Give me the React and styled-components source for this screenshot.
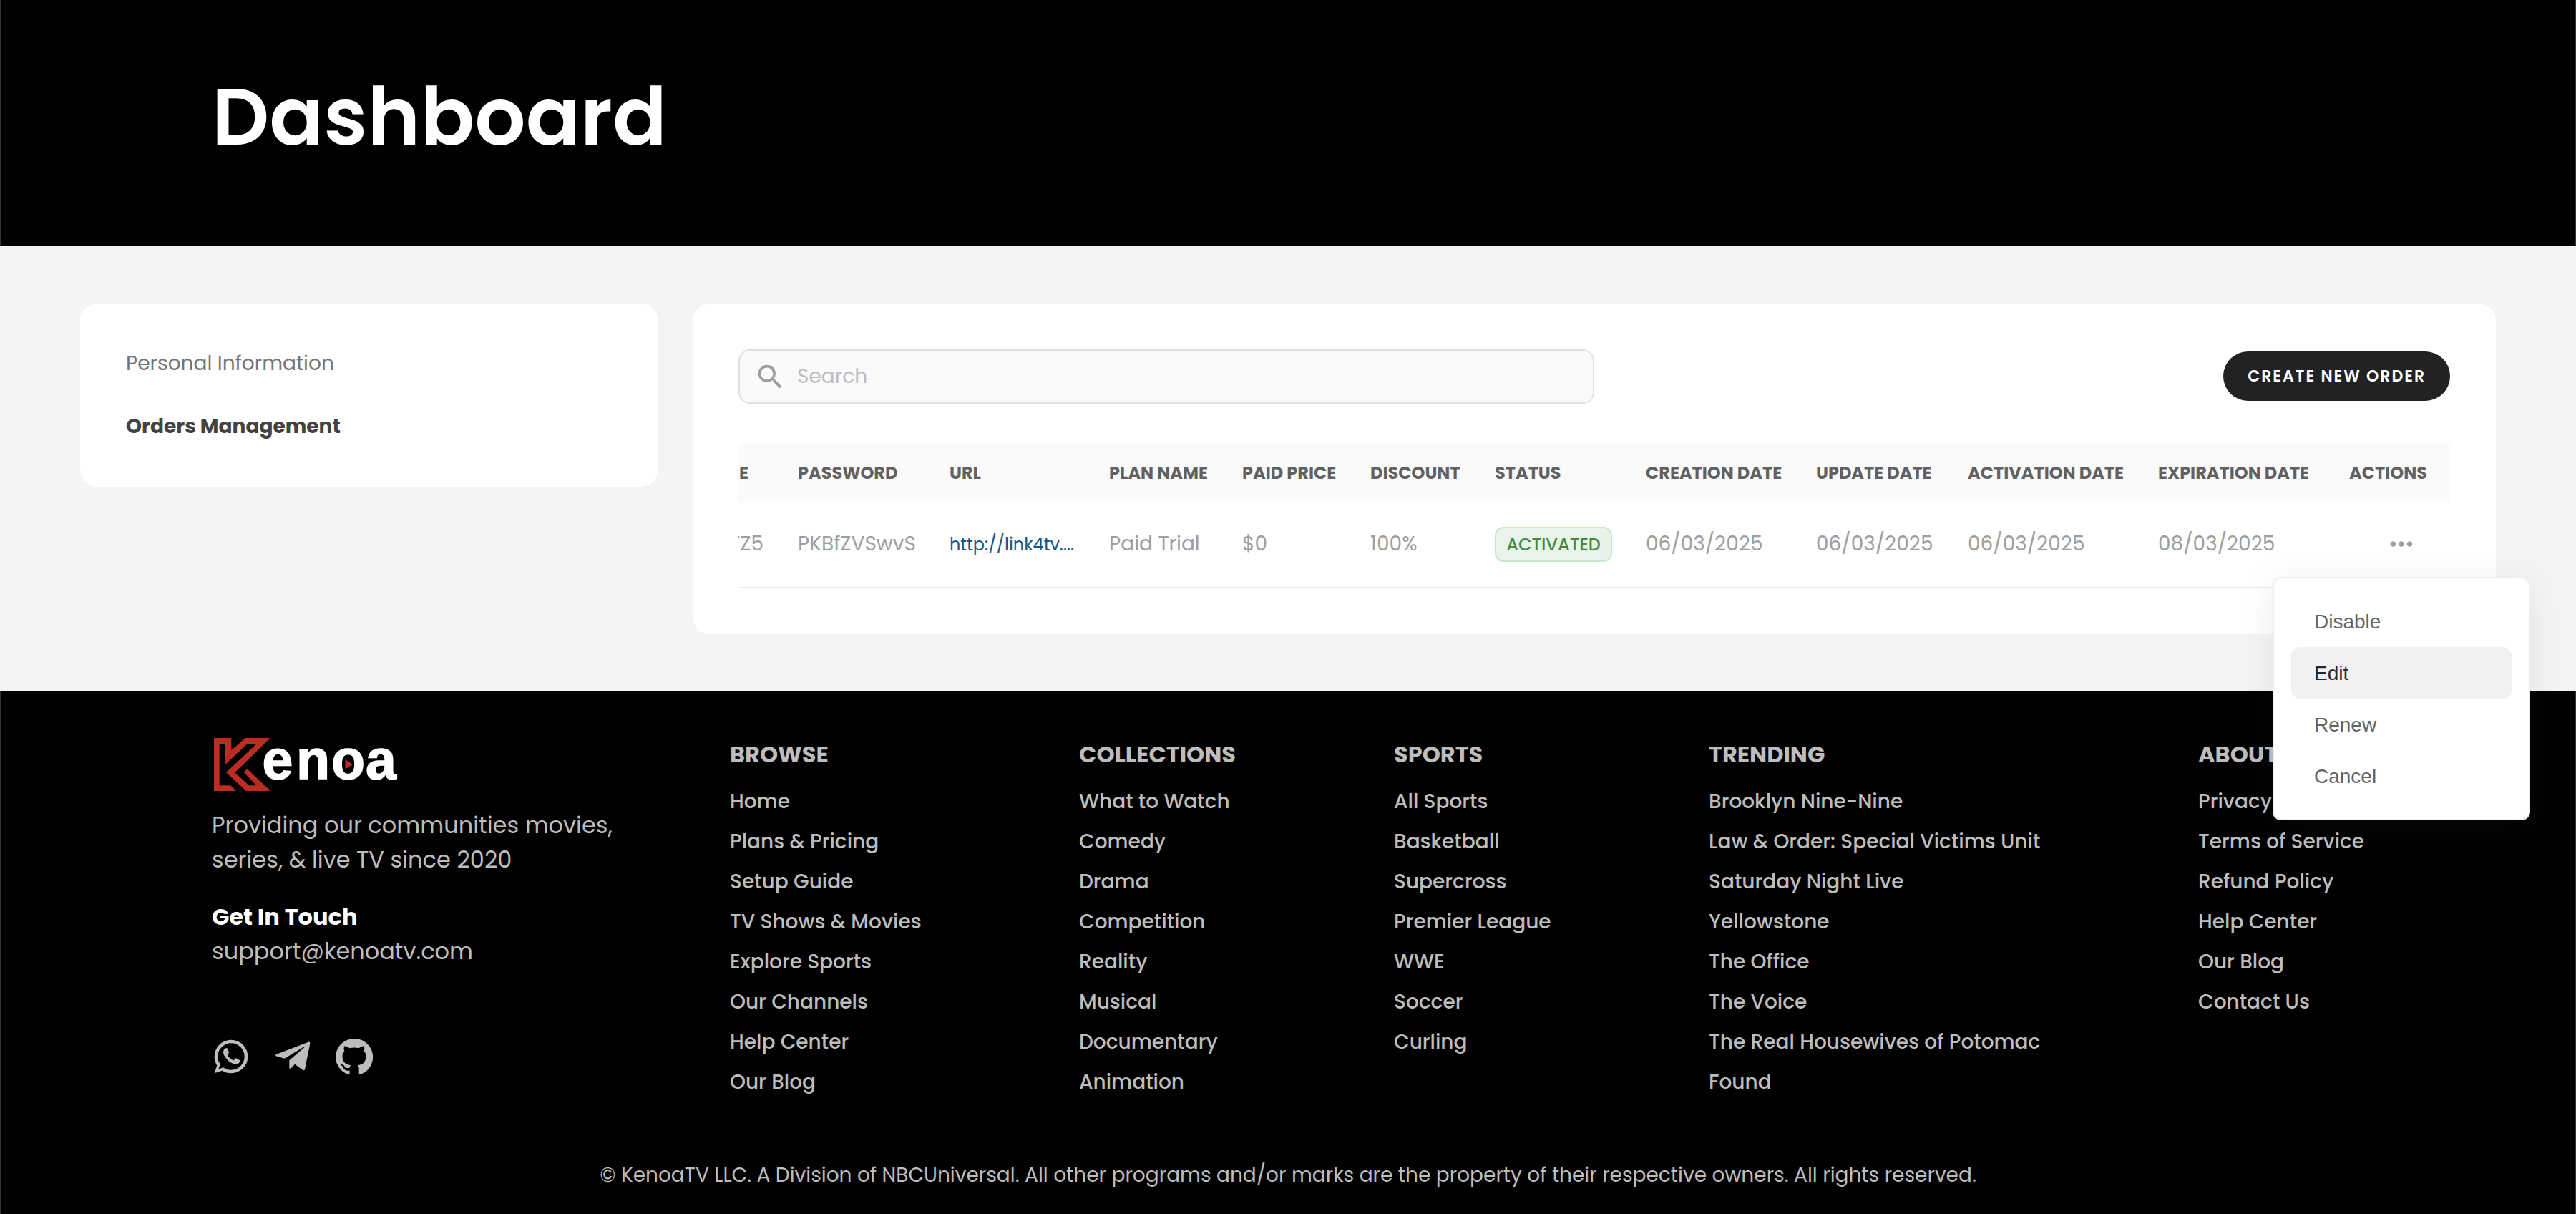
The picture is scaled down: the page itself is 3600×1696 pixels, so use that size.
import React from 'react'
import styled, { createGlobalStyle } from 'styled-components'
import { MdSearch, MdMoreHoriz } from 'react-icons/md'

const GlobalStyle = createGlobalStyle`
    * {
        box-sizing: border-box;
    }
    body {
        margin: 0;
        background: #f4f4f4;
        font-family: 'Poppins', 'Inter', sans-serif;
        -webkit-font-smoothing: antialiased;
    }
`;

const Page = styled.div`
    min-height: 1696px;
    display: flex;
    flex-direction: column;
`;

const Hero = styled.header`
    height: 344px;
    padding: 79px 294px 0;
    background: #000;
    border-left: 2px solid #333;
    border-right: 2px solid #333;
`;

const Title = styled.h1`
    margin: 0;
    font-size: 112px;
    font-weight: 600;
    line-height: 168px;
    color: #fff;
`;

const Main = styled.main`
    height: 622px;
    padding: 80px 112px;
    display: flex;
    align-items: flex-start;
    gap: 48px;
`;

const Card = styled.section`
    background: #fff;
    border-radius: 24px;
`;

const Sidebar = styled(Card)`
    width: 808px;
    flex-shrink: 0;
    padding: 40px 64px;
`;

const SidebarLink = styled.a`
    display: block;
    font-size: 28px;
    line-height: 88px;
    font-weight: ${({ $active }) => ($active ? 700 : 400)};
    color: ${({ $active }) => ($active ? '#424242' : '#757575')};
`;

const Orders = styled(Card)`
    width: 2520px;
    padding: 64px;
`;

const Toolbar = styled.div`
    display: flex;
    align-items: center;
    justify-content: space-between;
    margin-bottom: 56px;
`;

const SearchBox = styled.label`
    width: 1196px;
    height: 76px;
    padding-left: 20px;
    display: flex;
    align-items: center;
    gap: 15px;
    background: #fafafa;
    border: 2px solid #e0e0e0;
    border-radius: 16px;
    color: #9e9e9e;
`;

const SearchInput = styled.input`
    flex: 1;
    padding: 0;
    border: 0;
    outline: 0;
    background: transparent;
    font: 400 28px/42px 'Poppins', 'Inter', sans-serif;
    &::placeholder {
        color: #bdbdbd;
        opacity: 1;
    }
`;

const CreateButton = styled.button`
    height: 69px;
    margin-bottom: 1px;
    padding: 0 34px;
    border: 0;
    border-radius: 35px;
    background: #212224;
    color: #fff;
    font: 600 22px/34px 'Poppins', 'Inter', sans-serif;
    letter-spacing: 2px;
    white-space: nowrap;
`;

const Row = styled.div`
    display: grid;
    grid-template-columns: 59px 212px 223px 186px 179px 174px 211px 238px 212px 266px 266px 166px;
    align-items: center;
`;

const HeadRow = styled(Row)`
    height: 80px;
    background: #fafafa;
    font-size: 24px;
    font-weight: 700;
    color: #616161;
`;

const BodyRow = styled(Row)`
    height: 122px;
    border-bottom: 2px solid #eeeeee;
    font-size: 28px;
    color: #9e9e9e;
`;

const Cell = styled.div`
    padding: 0 0 0 24px;
    white-space: nowrap;
    &:last-child {
        padding: 0 32px 0 0;
        text-align: right;
    }
`;

// first column is scrolled out of view, only its tail is visible
const ClippedCell = styled.div`
    display: flex;
    justify-content: flex-end;
    width: ${({ $width }) => $width}px;
    overflow: hidden;
    white-space: nowrap;
`;

const UrlLink = styled.a`
    font-size: 24px;
    color: #1b5482;
`;

const Badge = styled.span`
    display: inline-flex;
    align-items: center;
    justify-content: center;
    width: 164px;
    height: 49px;
    vertical-align: middle;
    background: #e8f4e9;
    border: 2px solid #c8e6c9;
    border-radius: 12px;
    font-size: 24px;
    font-weight: 500;
    color: #43893f;
`;

const MoreButton = styled.span`
    position: relative;
    display: inline-flex;
    vertical-align: middle;
    margin-right: 13px;
    color: #9e9e9e;
`;

const Menu = styled.ul`
    position: absolute;
    z-index: 2;
    top: 69px;
    right: -157px;
    width: 360px;
    margin: 0;
    padding: 24px;
    list-style: none;
    background: #fff;
    border: 2px solid #eef0f0;
    border-radius: 12px;
    box-shadow: 0 8px 48px rgba(58, 83, 100, 0.1);
`;

const MenuItem = styled.li`
    padding: 2px 32px 0;
    text-align: left;
    font: 400 28px/70px 'Liberation Sans', Helvetica, sans-serif;
    border-radius: 12px;
    background: ${({ $active }) => ($active ? '#f0f1f3' : 'transparent')};
    color: ${({ $active }) => ($active ? '#1f2a33' : '#636363')};
`;

const Footer = styled.footer`
    height: 730px;
    padding: 64px 294px 0;
    background: #000;
    border-left: 2px solid #333;
    border-right: 2px solid #333;
    color: #bdbdbd;
    display: flex;
    flex-direction: column;
`;

const FooterGrid = styled.div`
    height: 591px;
    display: grid;
    grid-template-columns: 724px 488px 440px 440px 684px 1fr;
`;

const Brand = styled.div`
    display: flex;
    flex-direction: column;
    font-size: 32px;
    line-height: 48px;
`;

const LogoSvg = styled.svg`
    display: block;
    width: 280px;
    height: 76px;
    margin-bottom: 23px;
`;

const LogoText = styled.text`
    font: 700 77px 'Liberation Sans', Arial, sans-serif;
    fill: #fff;
    stroke: #fff;
    stroke-width: 1.6px;
`;

const Tagline = styled.p`
    width: 600px;
    margin: 0 0 32px;
`;

const ContactTitle = styled.div`
    font-weight: 700;
    color: #fff;
`;

const Socials = styled.div`
    display: flex;
    gap: 30px;
    margin: 95px 0 0 -1px;
    svg {
        width: 56px;
        height: 56px;
        fill: currentColor;
    }
`;

const ColumnTitle = styled.h3`
    margin: 0 0 14px;
    font-size: 32px;
    line-height: 48px;
    font-weight: 700;
`;

const FooterLink = styled.a`
    display: block;
    font-size: 28px;
    line-height: 56px;
    font-weight: 500;
    white-space: nowrap;
`;

const Copyright = styled.p`
    margin: 0;
    text-align: center;
    font-size: 28px;
    line-height: 42px;
`;

const headers = [
  'PASSWORD', 'URL', 'PLAN NAME', 'PAID PRICE', 'DISCOUNT', 'STATUS',
  'CREATION DATE', 'UPDATE DATE', 'ACTIVATION DATE', 'EXPIRATION DATE', 'ACTIONS',
];

const order = {
  usernameTail: 'TZ5',
  password: 'PKBfZVSwvS',
  url: 'http://link4tv....',
  plan: 'Paid Trial',
  price: '$0',
  discount: '100%',
  status: 'ACTIVATED',
  dates: ['06/03/2025', '06/03/2025', '06/03/2025', '08/03/2025'],
};

const actions = ['Disable', 'Edit', 'Renew', 'Cancel'];

const footerColumns = [
  {
    title: 'BROWSE',
    links: ['Home', 'Plans & Pricing', 'Setup Guide', 'TV Shows & Movies', 'Explore Sports', 'Our Channels', 'Help Center', 'Our Blog'],
  },
  {
    title: 'COLLECTIONS',
    links: ['What to Watch', 'Comedy', 'Drama', 'Competition', 'Reality', 'Musical', 'Documentary', 'Animation'],
  },
  {
    title: 'SPORTS',
    links: ['All Sports', 'Basketball', 'Supercross', 'Premier League', 'WWE', 'Soccer', 'Curling'],
  },
  {
    title: 'TRENDING',
    links: ['Brooklyn Nine-Nine', 'Law & Order: Special Victims Unit', 'Saturday Night Live', 'Yellowstone', 'The Office', 'The Voice', 'The Real Housewives of Potomac', 'Found'],
  },
  {
    title: 'ABOUT',
    links: ['Privacy Policy', 'Terms of Service', 'Refund Policy', 'Help Center', 'Our Blog', 'Contact Us'],
  },
];

const Logo = () => (
  <LogoSvg viewBox="0 0 280 76">
    <path
      d="M3 1H27.300V18.300L46.700 1H82L32.300 49.300L52 67.300H62.300L44.700 49L49.300 44L82 75H48L20 49.300L62.700 9H49.700L19 38V9H10.700V67.300H26.300L34 75H3Z"
      fill="#bb2c22"
    />
    <LogoText x="70.500 118 167 215" y="57.500">enoa</LogoText>
    <path d="M186.500 31L197 38L186.500 44.500Z" fill="#bb2c22" />
  </LogoSvg>
);

const WhatsAppIcon = () => (
  <svg viewBox="0 0 24 24">
    <path d="M16.75 13.96c.25.13.41.2.46.3.06.11.04.61-.21 1.18-.2.56-1.24 1.1-1.7 1.12-.46.02-.47.36-2.96-.73-2.49-1.09-3.99-3.75-4.11-3.92-.12-.17-.96-1.38-.92-2.61.05-1.22.69-1.8.95-2.04.24-.26.51-.29.68-.26h.47c.15 0 .36-.06.55.45l.69 1.87c.06.13.1.28.01.44l-.27.41-.39.42c-.12.12-.26.25-.12.5.12.26.62 1.09 1.32 1.78.91.88 1.71 1.17 1.95 1.3.24.14.39.12.54-.04l.81-.94c.19-.25.35-.19.58-.11l1.67.88M12 2a10 10 0 0 1 10 10 10 10 0 0 1-10 10c-1.97 0-3.8-.57-5.35-1.55L2 22l1.55-4.65A9.969 9.969 0 0 1 2 12 10 10 0 0 1 12 2m0 2a8 8 0 0 0-8 8c0 1.72.54 3.31 1.46 4.61L4.5 19.5l2.89-.96A7.95 7.95 0 0 0 12 20a8 8 0 0 0 8-8 8 8 0 0 0-8-8z" />
  </svg>
);

const TelegramIcon = () => (
  <svg viewBox="0 0 56 56">
    <path d="M5 25L49.800 7.700C51.500 7.100 52.600 8.100 52.300 10L45 46C44.600 47.400 43.300 47.700 42 46.800L31 38.800L25.600 44.300C24.600 45.300 23.300 44.900 23.300 43.500V33.300L45.200 14.600C45.600 14 45 13.700 44.300 14.100L18 30C17.200 30.500 16.500 30.600 15.700 30.400L5.400 27.600C3.900 27.100 3.700 25.700 5 25Z" />
  </svg>
);

const GitHubIcon = () => (
  <svg viewBox="0 0 24 24">
    <path d="M12 1.270a11 11 0 00-3.480 21.460c.550.090.730-.280.730-.550v-1.840c-3.030.640-3.670-1.460-3.670-1.460-.550-1.290-1.280-1.650-1.280-1.650-.920-.650.100-.650.100-.650 1.100 0 1.730 1.100 1.730 1.100.920 1.650 2.570 1.200 3.210.920a2 2 0 01.640-1.470c-2.470-.270-5.040-1.190-5.040-5.500 0-1.100.460-2.100 1.200-2.840a3.760 3.760 0 010-2.930s.910-.280 3.110 1.100c1.800-.490 3.700-.490 5.500 0 2.100-1.380 3.020-1.100 3.020-1.100a3.760 3.760 0 01.100 2.930c.830.740 1.200 1.740 1.200 2.940 0 4.210-2.570 5.130-5.040 5.400.450.370.820.920.820 2.020v3.030c0 .270.100.640.730.550A11 11 0 0012 1.270" />
  </svg>
);

const ActionsMenu = () => (
  <Menu>
    {actions.map((action) => (
      <MenuItem key={action} $active={action === 'Edit'}>{action}</MenuItem>
    ))}
  </Menu>
);

const OrdersTable = () => (
  <div>
    <HeadRow>
      <ClippedCell $width={14}>E</ClippedCell>
      {headers.map((header) => (
        <Cell key={header}>{header}</Cell>
      ))}
    </HeadRow>
    <BodyRow>
      <ClippedCell $width={35}>{order.usernameTail}</ClippedCell>
      <Cell>{order.password}</Cell>
      <Cell><UrlLink>{order.url}</UrlLink></Cell>
      <Cell>{order.plan}</Cell>
      <Cell>{order.price}</Cell>
      <Cell>{order.discount}</Cell>
      <Cell><Badge>{order.status}</Badge></Cell>
      {order.dates.map((date, index) => (
        <Cell key={index}>{date}</Cell>
      ))}
      <Cell>
        <MoreButton>
          <MdMoreHoriz size={46} />
          <ActionsMenu />
        </MoreButton>
      </Cell>
    </BodyRow>
  </div>
);

const App = () => {
  return (
    <Page>
      <GlobalStyle />
      <Hero>
        <Title>Dashboard</Title>
      </Hero>
      <Main>
        <Sidebar as="nav">
          <SidebarLink>Personal Information</SidebarLink>
          <SidebarLink $active>Orders Management</SidebarLink>
        </Sidebar>
        <Orders>
          <Toolbar>
            <SearchBox>
              <MdSearch size={45} />
              <SearchInput placeholder="Search" />
            </SearchBox>
            <CreateButton>CREATE NEW ORDER</CreateButton>
          </Toolbar>
          <OrdersTable />
        </Orders>
      </Main>
      <Footer>
        <FooterGrid>
          <Brand>
            <Logo />
            <Tagline>Providing our communities movies, series, & live TV since 2020</Tagline>
            <ContactTitle>Get In Touch</ContactTitle>
            <span>support@kenoatv.com</span>
            <Socials>
              <WhatsAppIcon />
              <TelegramIcon />
              <GitHubIcon />
            </Socials>
          </Brand>
          {footerColumns.map((column) => (
            <div key={column.title}>
              <ColumnTitle>{column.title}</ColumnTitle>
              {column.links.map((link) => (
                <FooterLink key={link}>{link}</FooterLink>
              ))}
            </div>
          ))}
        </FooterGrid>
        <Copyright>
          © KenoaTV LLC. A Division of NBCUniversal. All other programs and/or marks are the property of their respective owners. All rights reserved.
        </Copyright>
      </Footer>
    </Page>
  )
}

export default App
